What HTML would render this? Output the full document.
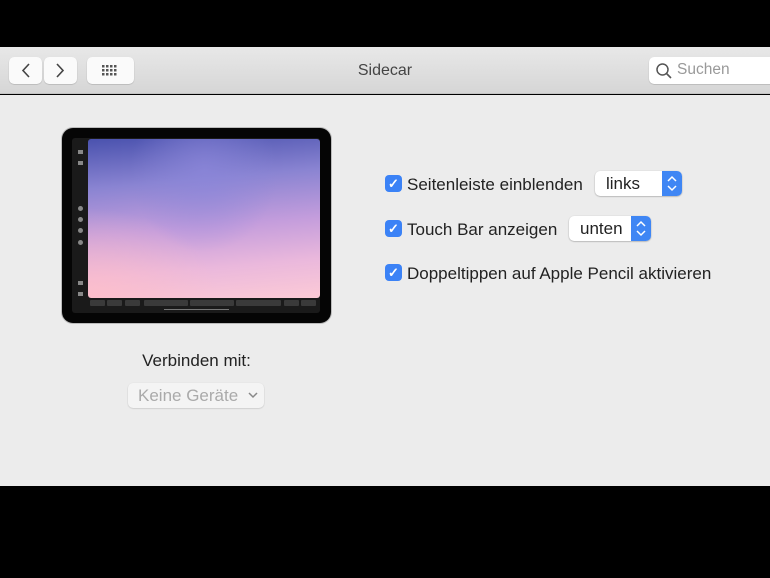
<!DOCTYPE html><html><head><style>
*{margin:0;padding:0;box-sizing:border-box}
body{width:770px;height:578px;background:#000;position:relative;overflow:hidden;font-family:"Liberation Sans",sans-serif}
.a{position:absolute}
.tb{left:0;top:47px;width:770px;height:47px;background:linear-gradient(#e8e8e8,#d6d6d6);border-bottom:1px solid #c4c4c4}
.btn{background:#fafafa;border-radius:5px;box-shadow:0 0.5px 1px rgba(0,0,0,.25);height:27px}
.content{left:0;top:95px;width:770px;height:391px;background:#ececec}
.cb{width:17px;height:17px;border-radius:4px;background:#3b82f6;color:#fff;font-size:13px;text-align:center;line-height:17px;font-weight:bold}
.lbl{font-size:17px;color:#222}
.pop{height:25px;background:#fff;border-radius:5px;box-shadow:0 0.5px 1.5px rgba(0,0,0,.35);font-size:17px;color:#222;line-height:25px;padding-left:11px}
.pop .ar{position:absolute;right:0;top:0;width:20px;height:25px;background:#3f86f4;border-radius:0 5px 5px 0}
.k{background:#3a3a3a;height:6px;top:300px;border-radius:1px}
.d{width:5px;height:5px;border-radius:50%;background:#888;left:78px}
.s{width:5px;height:4px;background:#888;left:78px}
</style></head><body>
<div class="a tb">
 <div class="a btn" style="left:9px;top:10px;width:33px"><svg width="33" height="27"><path d="M20 7 L14 13.5 L20 20" stroke="#444" stroke-width="1.6" fill="none"/></svg></div>
 <div class="a btn" style="left:44px;top:10px;width:33px"><svg width="33" height="27"><path d="M13 7 L19 13.5 L13 20" stroke="#444" stroke-width="1.6" fill="none"/></svg></div>
 <div class="a btn" style="left:87px;top:10px;width:47px"><svg width="47" height="27"><g fill="#555"><rect x="15" y="8" width="2.5" height="2.5"/><rect x="19" y="8" width="2.5" height="2.5"/><rect x="23" y="8" width="2.5" height="2.5"/><rect x="27" y="8" width="2.5" height="2.5"/><rect x="15" y="12" width="2.5" height="2.5"/><rect x="19" y="12" width="2.5" height="2.5"/><rect x="23" y="12" width="2.5" height="2.5"/><rect x="27" y="12" width="2.5" height="2.5"/><rect x="15" y="16" width="2.5" height="2.5"/><rect x="19" y="16" width="2.5" height="2.5"/><rect x="23" y="16" width="2.5" height="2.5"/><rect x="27" y="16" width="2.5" height="2.5"/></g></svg></div>
 <div class="a" style="left:0;width:770px;top:15px;text-align:center;font-size:16px;color:#444">Sidecar</div>
 <div class="a btn" style="left:649px;top:10px;width:130px;background:#fff"><svg class="a" style="left:6px;top:5px" width="18" height="18"><circle cx="7.5" cy="7.5" r="5.5" stroke="#555" stroke-width="1.5" fill="none"/><path d="M11.5 11.5 L16 16" stroke="#555" stroke-width="1.6"/></svg><span class="a" style="left:28px;top:4px;font-size:15.5px;color:#999">Suchen</span></div>
</div>
<div class="a content"></div>
<div class="a" style="left:62px;top:128px;width:269px;height:195px;background:#050505;border-radius:11px;box-shadow:0 0 0 1px #bbb"></div>
<div class="a" style="left:72px;top:138px;width:248px;height:175px;background:#1a1a1a;border-radius:3px"></div>
<div class="a" style="left:88px;top:139px;width:232px;height:159px;border-radius:3px;background:radial-gradient(ellipse at 50% 20%,rgba(140,135,218,.7) 0%,transparent 45%),radial-gradient(ellipse at 0% 100%,rgba(255,190,200,.8) 0%,transparent 40%),linear-gradient(175deg,#4a52ae 0%,#8a84d2 28%,#c49ddc 55%,#eab8dc 78%,#fccad6 100%)"></div>
<div class="a s" style="top:150px"></div><div class="a s" style="top:161px"></div>
<div class="a d" style="top:206px"></div><div class="a d" style="top:217px"></div><div class="a d" style="top:228px"></div><div class="a d" style="top:240px"></div>
<div class="a s" style="top:281px"></div><div class="a s" style="top:292px"></div>
<div class="a k" style="left:90px;width:15px"></div><div class="a k" style="left:107px;width:15px"></div><div class="a k" style="left:125px;width:15px"></div>
<div class="a k" style="left:144px;width:44px"></div><div class="a k" style="left:190px;width:44px"></div><div class="a k" style="left:236px;width:45px"></div>
<div class="a k" style="left:284px;width:15px"></div><div class="a k" style="left:301px;width:15px"></div>
<div class="a" style="left:164px;top:309px;width:65px;height:1px;background:#777"></div>
<div class="a" style="left:62px;width:269px;top:351px;text-align:center;font-size:17px;color:#222">Verbinden mit:</div>
<div class="a" style="left:128px;top:383px;width:136px;height:25px;background:#f4f4f4;border-radius:5px;box-shadow:0 0.5px 1.5px rgba(0,0,0,.2);font-size:17px;color:#aaa;line-height:25px;padding-left:10px">Keine Geräte<svg class="a" style="right:6px;top:9px" width="10" height="7"><path d="M1 1 L5 5 L9 1" stroke="#888" stroke-width="1.5" fill="none"/></svg></div>

<div class="a cb" style="left:385px;top:175px">✓</div><div class="a lbl" style="left:407px;top:175px">Seitenleiste einblenden</div>
<div class="a pop" style="left:595px;top:171px;width:87px">links<div class="ar"><svg width="20" height="25"><path d="M6 10 L10 6 L14 10 M6 15 L10 19 L14 15" stroke="#fff" stroke-width="1.5" fill="none"/></svg></div></div>
<div class="a cb" style="left:385px;top:220px">✓</div><div class="a lbl" style="left:407px;top:220px">Touch Bar anzeigen</div>
<div class="a pop" style="left:569px;top:216px;width:82px">unten<div class="ar"><svg width="20" height="25"><path d="M6 10 L10 6 L14 10 M6 15 L10 19 L14 15" stroke="#fff" stroke-width="1.5" fill="none"/></svg></div></div>
<div class="a cb" style="left:385px;top:264px">✓</div><div class="a lbl" style="left:407px;top:264px">Doppeltippen auf Apple Pencil aktivieren</div>
</body></html>
